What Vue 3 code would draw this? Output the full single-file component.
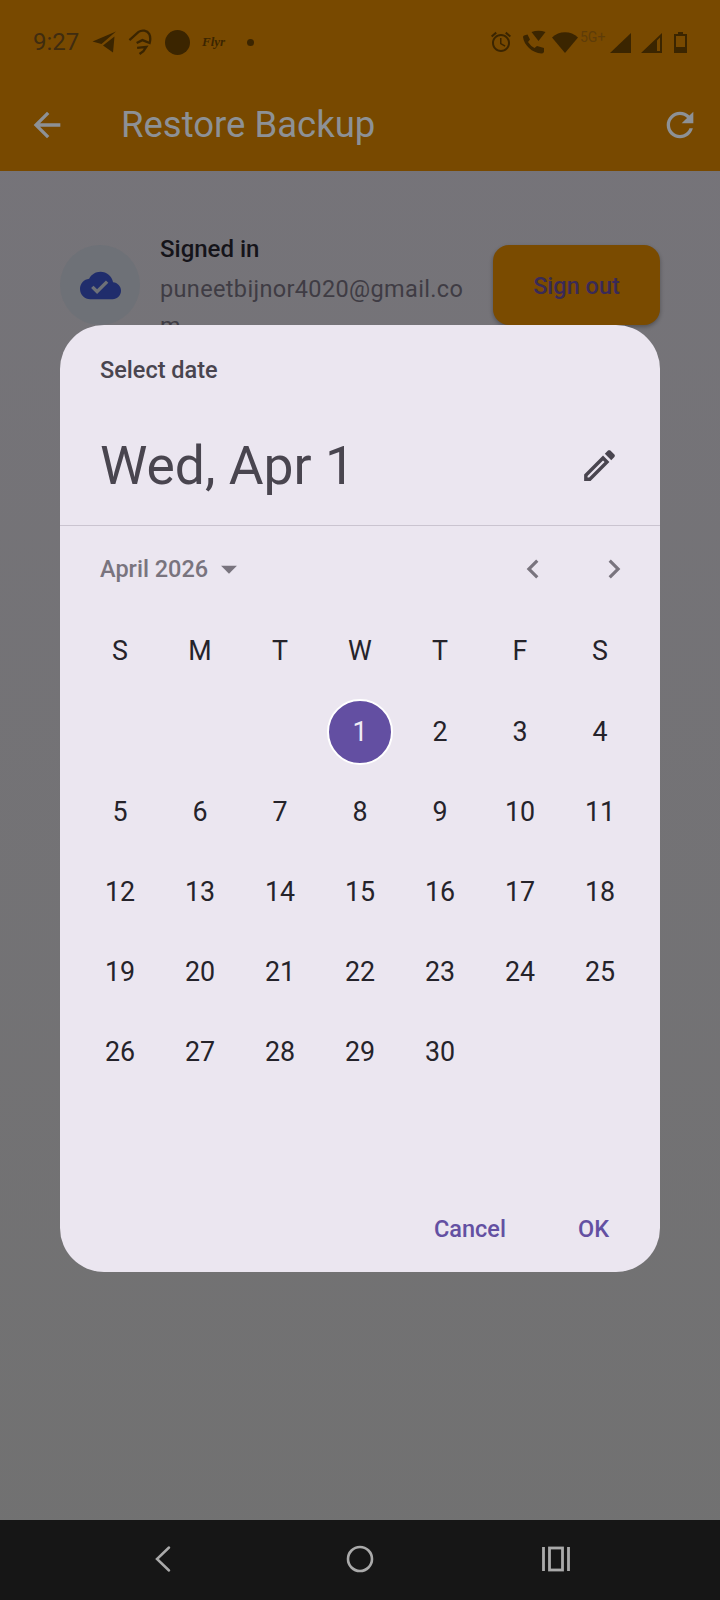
<script setup>
const weekdays = ['S', 'M', 'T', 'W', 'T', 'F', 'S']
const blanks = [1, 2, 3]
const days = Array.from({ length: 30 }, (_, i) => i + 1)
</script>

<template>
  <div class="screen">
    <header class="top">
      <div class="status">
        <span class="time">9:27</span>
        <svg class="ic-plane" viewBox="0 0 24 22"><path d="M0.500 10.500 24 0.500 9.500 13zM11 14.500 22.500 5.500 21 21.500z" /></svg>
        <svg class="ic-app" viewBox="0 0 26 28" fill="none" stroke-width="2.400"><path d="M1.500 11.500 11 3C14.500 0.500 20 1.500 22 5 23.500 8 23.500 11 22.500 14.500L15 11.500 9 14.500M9.500 19.500 19 18.500 16 23 12 26" /></svg>
        <span class="dot-big"></span>
        <span class="flyr">Flyr</span>
        <span class="dot-small"></span>
        <span class="grow"></span>
        <svg class="ic-alarm" viewBox="0 0 24 24"><path d="M22 5.720l-4.600-3.860-1.290 1.530 4.600 3.860L22 5.720zM7.880 3.390 6.600 1.860 2 5.710l1.290 1.530 4.590-3.850zM12.500 8H11v6l4.750 2.850.75-1.230-4-2.370V8zM12 4c-4.970 0-9 4.030-9 9s4.020 9 9 9c4.970 0 9-4.030 9-9s-4.030-9-9-9zm0 16c-3.870 0-7-3.130-7-7s3.130-7 7-7 7 3.130 7 7-3.130 7-7 7z" /></svg>
        <svg class="ic-call" viewBox="0 0 24 24"><path d="M9.500 2Q16.500-0.500 23.500 2L16.500 11zM2 5.500 5.500 4.500 8 9.500 6 12Q8.500 16 12.500 18L15 16 22 18 22 22Q21 23.500 19.500 23.500C10 23 2 15 1 7Q1 6 2 5.500z" /></svg>
        <svg class="ic-wifi" viewBox="0 0 26 21"><path d="M0 5.500C7-1.500 19-1.500 26 5.500L13 21z" /></svg>
        <span class="net">5G+</span>
        <svg class="ic-sig" viewBox="0 0 21 20"><path d="M21 0V20H0z" /></svg>
        <svg class="ic-sig two" viewBox="0 0 21 20"><path d="M21 0V20H0zM19 4.500 16 7.500V18H19z" fill-rule="evenodd" /></svg>
        <svg class="ic-batt" viewBox="0 0 13 21"><path d="M4 0H9V2H13V21H0V2H4zM2 4V15H11V4z" fill-rule="evenodd" /></svg>
      </div>
      <div class="bar">
        <svg class="ic-back" viewBox="0 0 24 24"><path d="M20 11H7.830l5.590-5.590L12 4l-8 8 8 8 1.410-1.410L7.830 13H20v-2z" /></svg>
        <h1 class="title">Restore Backup</h1>
        <svg class="ic-refresh" viewBox="0 0 24 24"><path d="M17.650 6.350C16.200 4.900 14.210 4 12 4c-4.420 0-7.990 3.580-7.990 8s3.570 8 7.990 8c3.730 0 6.840-2.550 7.730-6h-2.080c-.82 2.330-3.040 4-5.650 4-3.310 0-6-2.690-6-6s2.690-6 6-6c1.660 0 3.140.69 4.220 1.780L13 11h7V4l-2.350 2.350z" /></svg>
      </div>
    </header>

    <main class="content">
      <div class="account">
        <div class="avatar">
          <svg viewBox="0 0 24 24"><path d="M19.350 10.040C18.670 6.590 15.640 4 12 4 9.110 4 6.600 5.640 5.350 8.040 2.340 8.360 0 10.910 0 14c0 3.310 2.690 6 6 6h13c2.760 0 5-2.240 5-5 0-2.640-2.050-4.780-4.650-4.960zM10 17l-3.500-3.500 1.410-1.410L10 14.170 15.180 9l1.410 1.410L10 17z" /></svg>
        </div>
        <div class="who">
          <div class="signed">Signed in</div>
          <div class="email">puneetbijnor4020@gmail.com</div>
        </div>
        <button class="signout">Sign out</button>
      </div>
    </main>

    <nav class="nav">
      <svg viewBox="0 0 30 30" fill="none" stroke-width="2.500"><path d="M20 3.500 8 15l12 11.500" stroke-linecap="round" /></svg>
      <svg viewBox="0 0 30 30" fill="none" stroke-width="2.600"><circle cx="15" cy="15" r="12" /></svg>
      <svg viewBox="0 0 30 30" fill="none" stroke-width="2.800"><path d="M2.500 3v24M27.500 3v24" /><rect x="8.500" y="4" width="13" height="22" /></svg>
    </nav>

    <section class="dialog">
      <div class="label">Select date</div>
      <div class="headline">
        <span>Wed, Apr 1</span>
        <svg viewBox="0 0 24 24"><path d="M3 17.250V21h3.750L17.810 9.940l-3.750-3.750L3 17.250zM5.920 19H5v-.92l9.060-9.060.92.92L5.920 19zM20.710 5.630l-2.340-2.340c-.2-.2-.45-.29-.71-.29s-.51.1-.7.29l-1.830 1.830 3.750 3.750 1.830-1.830c.39-.39.39-1.020 0-1.410z" /></svg>
      </div>
      <div class="divider"></div>
      <div class="month">
        <span class="month-name">April 2026</span>
        <svg class="caret" viewBox="0 0 24 24"><path d="M7 10l5 5 5-5z" /></svg>
        <span class="grow"></span>
        <svg class="chev" viewBox="0 0 24 24"><path d="M15.410 7.410 14 6l-6 6 6 6 1.410-1.410L10.830 12z" /></svg>
        <svg class="chev" viewBox="0 0 24 24"><path d="M10 6 8.590 7.410 13.170 12l-4.580 4.590L10 18l6-6z" /></svg>
      </div>
      <div class="weekdays">
        <span v-for="(w, i) in weekdays" :key="i">{{ w }}</span>
      </div>
      <div class="days">
        <span v-for="b in blanks" :key="'b' + b"></span>
        <span v-for="d in days" :key="d" class="day" :class="{ selected: d === 1 }"><i>{{ d }}</i></span>
      </div>
      <div class="actions">
        <span>Cancel</span>
        <span>OK</span>
      </div>
    </section>
  </div>
</template>

<style scoped>
.screen {
  position: relative;
  width: 720px;
  height: 1600px;
  display: flex;
  flex-direction: column;
  overflow: hidden;
  font-family: Roboto, "Noto Sans", sans-serif;
  background: linear-gradient(#76747a, #717171);
}
.top {
  height: 171px;
  background: #784900;
  flex: none;
}
.status {
  height: 84px;
  display: flex;
  align-items: center;
  padding: 0 33px 0 33px;
  color: #3b2500;
}
.status svg { fill: #3b2500; flex: none; }
.grow { flex: 1; }
.time {
  font-size: 24px;
  color: #3f2c10;
  width: 59px;
}
.ic-plane { width: 24px; height: 22px; }
.ic-app { width: 25px; height: 27px; margin-left: 12px; fill: none !important; stroke: #3b2500; }
.dot-big {
  width: 25px;
  height: 25px;
  border-radius: 50%;
  background: #3b2500;
  margin-left: 12px;
}
.flyr {
  font-family: "Liberation Serif", serif;
  font-style: italic;
  font-size: 13px;
  font-weight: 700;
  width: 36px;
  margin-left: 12px;
  color: #3b2500;
}
.dot-small {
  width: 7px;
  height: 7px;
  border-radius: 50%;
  background: #3b2500;
  margin-left: 9px;
}
.ic-alarm { width: 24px; height: 24px; }
.ic-call { width: 24px; height: 24px; margin-left: 9px; }
.ic-wifi { width: 26px; height: 21px; margin-left: 6px; }
.net {
  font-size: 14px;
  color: #5e3c08;
  width: 30px;
  margin-left: 2px;
  align-self: flex-start;
  margin-top: 29px;
}
.ic-sig { width: 21px; height: 20px; margin-top: 1px; }
.ic-sig.two { margin-left: 10px; }
.ic-batt { width: 13px; height: 21px; margin-left: 12px; }
.bar {
  height: 81px;
  display: flex;
  align-items: center;
  padding: 0 20px 0 27px;
  color: #8d9196;
}
.bar svg { fill: #8d9196; flex: none; }
.ic-back { width: 40px; height: 40px; }
.title {
  margin: 0 0 0 54px;
  font-size: 36.500px;
  font-weight: 400;
  flex: 1;
}
.ic-refresh { width: 40px; height: 40px; }
.content {
  flex: 1;
  padding: 73px 60px 0;
}
.account {
  display: flex;
  align-items: flex-start;
}
.avatar {
  width: 80px;
  height: 80px;
  margin-top: 1px;
  border-radius: 50%;
  background: #6e7177;
  display: flex;
  align-items: center;
  justify-content: center;
  flex: none;
}
.avatar svg { width: 41px; height: 41px; fill: #202d6c; }
.who {
  width: 306px;
  margin-left: 20px;
  flex: none;
}
.signed {
  font-size: 24px;
  font-weight: 500;
  line-height: 28px;
  margin-top: -9px;
  color: #15141a;
}
.email {
  font-size: 23.500px;
  line-height: 37px;
  margin-top: 8px;
  color: #3f3c44;
  word-break: break-all;
  letter-spacing: 0.350px;
}
.signout {
  margin: 1px 0 0 27px;
  width: 167px;
  height: 80px;
  flex: none;
  border: 0;
  padding: 2px 0 0;
  border-radius: 16px;
  background: #7a4b00;
  color: #392a57;
  font-family: inherit;
  font-size: 23.500px;
  font-weight: 500;
  box-shadow: 0 2px 4px rgba(0, 0, 0, 0.3);
}
.nav {
  height: 80px;
  background: #161616;
  flex: none;
  display: flex;
  align-items: center;
  justify-content: center;
  position: relative;
}
.nav svg {
  width: 30px;
  height: 30px;
  stroke: #aaaaaa;
  position: absolute;
  top: 24px;
}
.nav svg:nth-child(1) { left: 149px; }
.nav svg:nth-child(2) { left: 345px; }
.nav svg:nth-child(3) { left: 541px; }
.dialog {
  position: absolute;
  left: 60px;
  top: 325px;
  width: 600px;
  height: 947px;
  border-radius: 44px;
  background: #ebe6f0;
  display: flex;
  flex-direction: column;
}
.label {
  margin: 32px 40px 0;
  font-size: 23.500px;
  line-height: 26px;
  font-weight: 500;
  color: #49454f;
}
.headline {
  margin: 45px 40px 0;
  display: flex;
  justify-content: space-between;
  align-items: center;
  height: 74px;
  font-size: 53.400px;
  color: #49454f;
}
.headline svg {
  width: 41px;
  height: 41px;
  fill: #49454f;
}
.divider {
  margin-top: 23px;
  height: 1px;
  background: #cac4d0;
}
.month {
  height: 64px;
  margin-top: 11px;
  padding: 0 27px 0 40px;
  display: flex;
  align-items: center;
  color: #79747e;
}
.month-name {
  font-size: 23.500px;
  font-weight: 500;
}
.month svg { fill: #79747e; }
.caret { width: 38px; height: 38px; margin-left: 2px; }
.chev { width: 38px; height: 38px; margin-left: 43px; }
.weekdays, .days {
  padding: 0 20px;
  display: grid;
  grid-template-columns: repeat(7, 80px);
  color: #25232a;
  font-size: 26.800px;
  text-align: center;
}
.weekdays {
  height: 82px;
  align-items: center;
  margin-top: 9px;
}
.days {
  grid-auto-rows: 80px;
  height: 480px;
}
.day {
  display: flex;
  align-items: center;
  justify-content: center;
}
.day i {
  font-style: normal;
  width: 64px;
  height: 64px;
  display: flex;
  align-items: center;
  justify-content: center;
  border-radius: 50%;
}
.selected i {
  background: #634fa2;
  color: #f0ecf5;
  outline: 2px solid #ffffff;
  outline-offset: -1px;
}
.actions {
  margin-top: 43px;
  padding: 0 51px 0 0;
  display: flex;
  justify-content: flex-end;
  gap: 72px;
  font-size: 23.500px;
  font-weight: 500;
  color: #6350a2;
}
</style>
